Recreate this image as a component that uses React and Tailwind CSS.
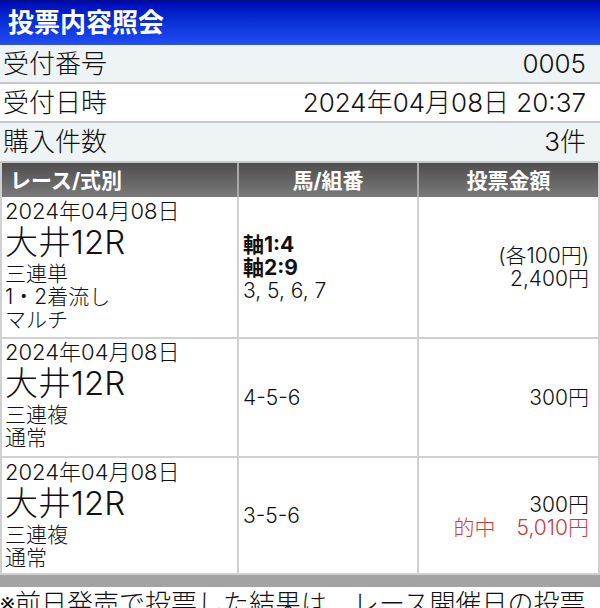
import React from "react";

const F = "font-['Inter','Noto_Sans_CJK_JP',sans-serif]";

function InfoRow({ label, value, bg, h }) {
  return (
    <div className={`flex items-center justify-between border-b-2 border-[#c8c8c8] pl-[3px] pr-[14px] text-[26px] leading-none text-[#111] ${bg} ${h}`}>
      <span>{label}</span>
      <span>{value}</span>
    </div>
  );
}

function RaceCell({ lines, pt }) {
  return (
    <div className={`w-[237px] shrink-0 border-r-2 border-[#d0d0d0] pl-[3px] text-[#111] ${pt}`}>
      <div className="text-[22px] leading-[23px]">2024年04月08日</div>
      <div className="text-[33px] leading-[39px]">大井12R</div>
      {lines.map((t) => (
        <div key={t} className="text-[21px] leading-[23px]">{t}</div>
      ))}
    </div>
  );
}

export default function App() {
  return (
    <div className={`w-[600px] h-[608px] overflow-hidden bg-white font-light ${F}`}>
      <div className="h-[45px] flex items-center pl-[8px] bg-gradient-to-b from-[#0004b8] to-[#1f4cf4] border-b border-[#3a58c8] border-t border-t-[#001080]">
        <span className="text-white font-bold text-[26px] leading-none">投票内容照会</span>
      </div>
      <InfoRow label="受付番号" value="0005" bg="bg-[#eef4f6]" h="h-[39px]" />
      <InfoRow label="受付日時" value="2024年04月08日 20:37" bg="bg-white" h="h-[39px]" />
      <InfoRow label="購入件数" value="3件" bg="bg-[#eef4f6]" h="h-[40px]" />

      <div className="border-x-2 border-[#d0d0d0]">
        <div className="flex h-[34px] bg-gradient-to-b from-[#4e4e4e] to-[#7a7a7a] text-white font-bold text-[21px] leading-none">
          <div className="w-[237px] shrink-0 flex items-center pl-[8px] border-r-2 border-[#a8a8a8]">レース/式別</div>
          <div className="w-[180px] shrink-0 flex items-center justify-center border-r-2 border-[#a8a8a8]">馬/組番</div>
          <div className="flex-1 flex items-center justify-center">投票金額</div>
        </div>

        <div className="flex h-[142px] border-b-2 border-[#d0d0d0]">
          <RaceCell lines={["三連単", "1・2着流し", "マルチ"]} pt="pt-[3px]" />
          <div className="w-[180px] shrink-0 border-r-2 border-[#d0d0d0] pl-[4px] flex flex-col justify-center text-[21px] leading-[23px] text-[#111]">
            <div className="font-bold">軸1:4</div>
            <div className="font-bold">軸2:9</div>
            <div>3, 5, 6, 7</div>
          </div>
          <div className="flex-1 pr-[9px] flex flex-col justify-center items-end text-[21px] leading-[23px] text-[#111]">
            <div>(各100円)</div>
            <div>2,400円</div>
          </div>
        </div>

        <div className="flex h-[119px] border-b-2 border-[#d0d0d0]">
          <RaceCell lines={["三連複", "通常"]} pt="pt-[2px]" />
          <div className="w-[180px] shrink-0 border-r-2 border-[#d0d0d0] pl-[4px] flex flex-col justify-center text-[21px] leading-[23px] text-[#111]">
            <div>4-5-6</div>
          </div>
          <div className="flex-1 pr-[9px] flex flex-col justify-center items-end text-[21px] leading-[23px] text-[#111]">
            <div>300円</div>
          </div>
        </div>

        <div className="flex h-[117px] border-b-2 border-[#d0d0d0]">
          <RaceCell lines={["三連複", "通常"]} pt="pt-[3px]" />
          <div className="w-[180px] shrink-0 border-r-2 border-[#d0d0d0] pl-[4px] flex flex-col justify-center text-[21px] leading-[23px] text-[#111]">
            <div>3-5-6</div>
          </div>
          <div className="flex-1 pr-[9px] flex flex-col justify-center items-end text-[21px] leading-[23px] text-[#111]">
            <div>300円</div>
            <div className="text-[#c83c3c]">的中　5,010円</div>
          </div>
        </div>
      </div>

      <div className="h-[12px] bg-[#a3a3a3]" />
      <div className="pt-[1px] text-[26px] leading-[32px] text-[#111] whitespace-nowrap">※前日発売で投票した結果は、レース開催日の投票</div>
    </div>
  );
}
